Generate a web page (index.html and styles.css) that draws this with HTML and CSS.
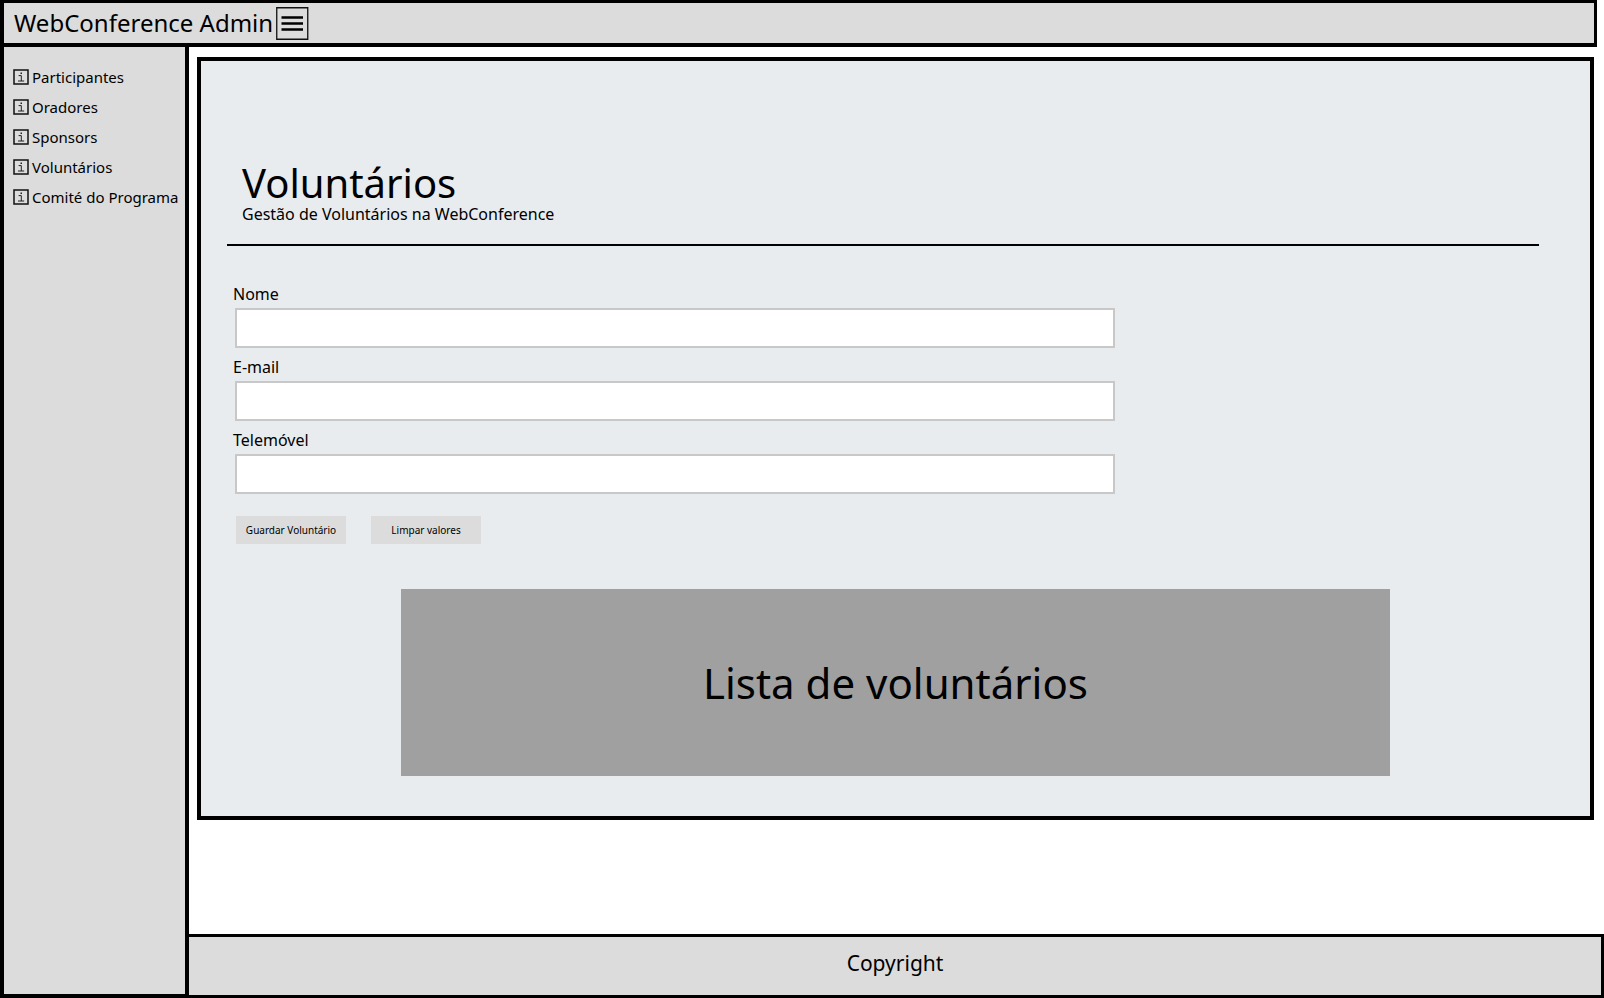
FILE: index.html
```html
<!DOCTYPE html>
<html lang="pt">
<head>
<meta charset="utf-8">
<title>WebConference Admin</title>
<link rel="stylesheet" href="styles.css">
</head>
<body>
<svg class="sprite" aria-hidden="true">
  <symbol id="info" viewBox="0 0 16 16">
    <path d="M1 1H15V15H1Z" fill="none" stroke="#111" stroke-width="1.5"/>
    <path d="M5.6 6.6H8.3V12M5 12H11.2" fill="none" stroke="#222" stroke-width="1"/>
    <path d="M7.5 3.4H9V4.9H7.5Z" fill="#222"/>
  </symbol>
</svg>
<header class="topbar">
  <span class="brand">WebConference Admin</span>
  <button class="menu-button" type="button" aria-label="Menu">
    <svg viewBox="0 0 33 33" aria-hidden="true">
      <path d="M.75 .75H31.75V32.25H.75Z" fill="none" stroke="#111" stroke-width="1.3"/>
      <path d="M5.5 10.5H27M5.5 16.5H27M5.5 22.5H27" stroke="#000" stroke-width="2.4"/>
    </svg>
  </button>
</header>
<nav class="sidebar">
  <ul class="nav-list">
    <li><a href="#"><svg aria-hidden="true"><use href="#info"/></svg>Participantes</a></li>
    <li><a href="#"><svg aria-hidden="true"><use href="#info"/></svg>Oradores</a></li>
    <li><a href="#"><svg aria-hidden="true"><use href="#info"/></svg>Sponsors</a></li>
    <li><a href="#"><svg aria-hidden="true"><use href="#info"/></svg>Voluntários</a></li>
    <li><a href="#"><svg aria-hidden="true"><use href="#info"/></svg>Comité do Programa</a></li>
  </ul>
</nav>
<main class="content">
  <section class="panel">
    <div class="panel-head">
      <h1>Voluntários</h1>
      <p>Gestão de Voluntários na WebConference</p>
    </div>
    <form class="form">
      <label for="nome">Nome</label>
      <input id="nome" type="text">
      <label for="email">E-mail</label>
      <input id="email" type="email">
      <label for="telemovel">Telemóvel</label>
      <input id="telemovel" type="tel">
      <div class="actions">
        <button type="submit">Guardar Voluntário</button>
        <button type="reset">Limpar valores</button>
      </div>
    </form>
    <div class="list">Lista de voluntários</div>
  </section>
</main>
<footer class="footer">Copyright</footer>
</body>
</html>
```

FILE: styles.css
```css
* {
  box-sizing: border-box;
}

body {
  margin: 0;
  min-height: 100vh;
  display: grid;
  grid-template-columns: 189px 1fr;
  grid-template-rows: auto 1fr auto;
  background: #fff;
  color: #000;
  font: 16px/24px "Noto Sans", sans-serif;
}

.sprite {
  position: absolute;
  width: 0;
  height: 0;
}

.topbar {
  grid-column: 1 / -1;
  display: flex;
  align-items: center;
  gap: 3px;
  height: 47px;
  margin-right: 7px;
  padding-left: 10px;
  background: #dcdcdc;
  border: 4px solid #000;
  border-top-width: 3px;
  border-right-width: 3px;
}

.brand {
  font-size: 24px;
  line-height: 32px;
}

.menu-button {
  width: 33px;
  height: 33px;
  padding: 0;
  border: 0;
  background: none;
}

.menu-button svg {
  display: block;
  width: 33px;
  height: 33px;
}

.sidebar {
  grid-row: 2 / 4;
  background: #dcdcdc;
  border: 4px solid #000;
  border-top: 0;
  font-size: 15px;
}

.nav-list {
  display: grid;
  gap: 6px;
  margin: 0;
  padding: 18px 0 0 9px;
  list-style: none;
}

.nav-list a {
  display: flex;
  align-items: center;
  gap: 3px;
  color: inherit;
  text-decoration: none;
  white-space: nowrap;
}

.nav-list svg {
  flex: none;
  width: 16px;
  height: 16px;
}

.content {
  padding: 10px 10px 24px 8px;
}

.panel {
  padding: 100px 0 40px;
  background: #e8ecef;
  border: 4px solid #000;
}

.panel-head {
  margin: 0 51px 0 26px;
  padding: 0 0 21px 15px;
  border-bottom: 2px solid #000;
}

.panel-head h1 {
  margin: 0;
  font-size: 40px;
  font-weight: 400;
  line-height: 44px;
}

.panel-head p {
  margin: 0;
  line-height: 18px;
}

.form {
  display: flex;
  flex-direction: column;
  max-width: 914px;
  margin-top: 36px;
  padding-left: 32px;
}

.form label {
  align-self: flex-start;
}

.form input {
  height: 40px;
  margin: 2px 0 7px 2px;
  padding: 0 10px;
  background: #fff;
  border: 2px solid #c8c8c8;
  font: inherit;
}

.actions {
  display: flex;
  gap: 25px;
  margin: 15px 0 0 3px;
}

.actions button {
  width: 110px;
  height: 28px;
  padding: 0;
  background: #dcdcdc;
  border: 0;
  color: inherit;
  font: 10px/16px "Noto Sans", sans-serif;
}

.list {
  display: flex;
  align-items: center;
  justify-content: center;
  min-height: 187px;
  margin: 45px 200px 0;
  background: #a0a0a0;
  font-size: 42px;
  line-height: 56px;
}

.footer {
  display: flex;
  align-items: center;
  justify-content: center;
  height: 64px;
  padding-bottom: 6px;
  background: #dcdcdc;
  border: 3px solid #000;
  border-left: 0;
  font-size: 21px;
  line-height: 30px;
}
```
